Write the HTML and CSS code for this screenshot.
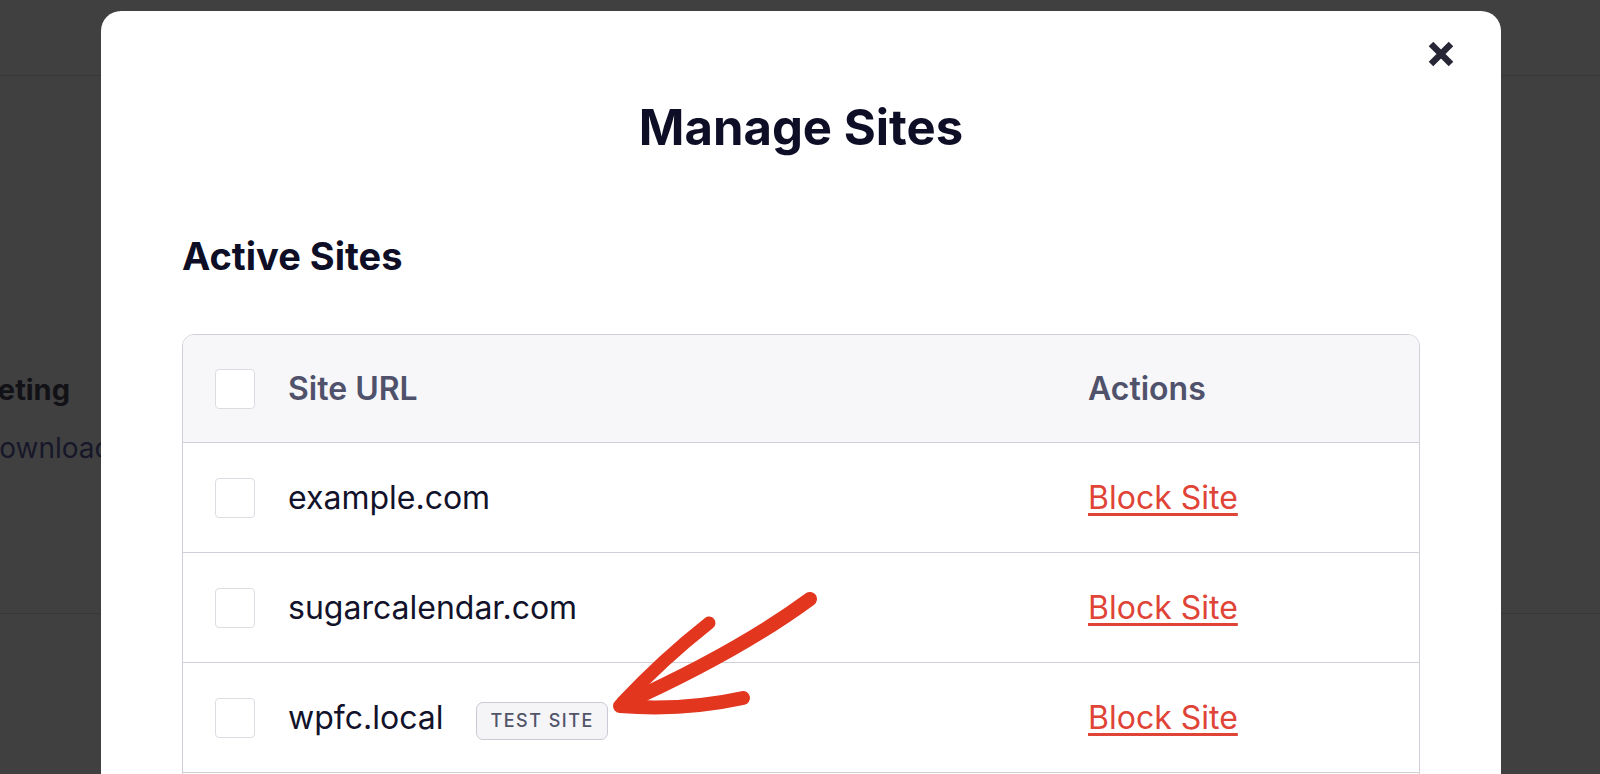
FILE: index.html
```html
<!DOCTYPE html>
<html lang="en">
<head>
    <meta charset="UTF-8">
    <meta name="viewport" content="width=device-width, initial-scale=1.0">
    <title>Manage Sites</title>
    <link rel="stylesheet" href="styles.css">
</head>
<body>

    <!-- page behind the modal -->
    <div class="page">
        <div class="topbar"></div>
        <div class="section">
            <div class="section-inner">
                <div class="section-title">Marketing</div>
                <div class="section-text">Download</div>
            </div>
        </div>
    </div>

    <!-- modal -->
    <div class="overlay">
        <div class="modal">
            <button class="close-btn" aria-label="Close">
                <svg width="26" height="26" viewBox="0 0 26 26">
                    <path d="M3 3 L23 23 M23 3 L3 23" stroke="#262637" stroke-width="6.4" fill="none"/>
                </svg>
            </button>

            <h1 class="modal-title">Manage Sites</h1>
            <h2 class="sub-title">Active Sites</h2>

            <div class="sites-table">
                <div class="row head">
                    <span class="check"></span>
                    <span class="col-url">Site URL</span>
                    <span class="col-actions">Actions</span>
                </div>
                <div class="row">
                    <span class="check"></span>
                    <span class="col-url">example.com</span>
                    <span class="col-actions"><a href="#" class="block-link">Block Site</a></span>
                </div>
                <div class="row">
                    <span class="check"></span>
                    <span class="col-url">sugarcalendar.com</span>
                    <span class="col-actions"><a href="#" class="block-link">Block Site</a></span>
                </div>
                <div class="row">
                    <span class="check"></span>
                    <span class="col-url">wpfc.local <span class="badge">Test Site</span></span>
                    <span class="col-actions"><a href="#" class="block-link">Block Site</a></span>
                </div>
                <div class="row empty"></div>
            </div>
        </div>
    </div>

    <!-- hand drawn arrow pointing at the badge -->
    <svg class="arrow" width="1600" height="774" viewBox="0 0 1600 774">
        <g stroke="#e2361f" fill="none" stroke-linecap="round">
            <path d="M810 599 Q738 652 623 704" stroke-width="14"/>
            <path d="M709 623 Q662 660 622 703" stroke-width="13"/>
            <path d="M620 706 Q684 711 743 698" stroke-width="14"/>
        </g>
    </svg>

</body>
</html>
```

FILE: styles.css
```css
body {
    margin: 0;
    height: 774px;
    overflow: hidden;
    background: #404040;
    font-family: "Inter", "Noto Sans", sans-serif;
    position: relative;
}

/* page behind the overlay */
.page {
    height: 100%;
}
.topbar {
    height: 75px;
    border-bottom: 1px solid #383838;
}
.section {
    height: 538px;
    border-bottom: 1px solid #383838;
    padding-top: 296px;
    box-sizing: border-box;
}
.section-inner {
    width: 70px;
    display: flex;
    flex-direction: column;
    align-items: flex-end;
    white-space: nowrap;
}
.section-title {
    font-size: 29px;
    font-weight: 700;
    line-height: 36px;
    color: #111116;
}
.section-text {
    align-self: flex-start;
    margin-left: -21px;
    margin-top: 22px;
    font-size: 28px;
    line-height: 36px;
    color: #17172a;
}

/* modal */
.overlay {
    position: absolute;
    top: 0;
    left: 0;
    width: 100%;
    height: 100%;
}
.modal {
    position: absolute;
    top: 11px;
    left: 101px;
    width: 1400px;
    height: 900px;
    background: #fff;
    border-radius: 20px;
    padding: 88px 81px 0;
    box-sizing: border-box;
}
.close-btn {
    position: absolute;
    top: 30px;
    right: 47px;
    width: 26px;
    height: 26px;
    padding: 0;
    border: none;
    background: none;
    cursor: pointer;
}
.close-btn svg {
    display: block;
}
.modal-title {
    margin: 0;
    text-align: center;
    font-size: 49px;
    line-height: 58px;
    font-weight: 700;
    color: #0e0e26;
}
.sub-title {
    margin: 76px 0 0;
    font-size: 38px;
    line-height: 46px;
    font-weight: 700;
    color: #0e0e26;
}

/* table */
.sites-table {
    margin-top: 55px;
    border: 1px solid #cfd0d8;
    border-radius: 12px;
    overflow: hidden;
}
.row {
    display: grid;
    grid-template-columns: 40px 1fr 331px;
    column-gap: 33px;
    align-items: center;
    height: 109px;
    padding-left: 32px;
    border-top: 1px solid #cfd0d8;
    font-size: 32px;
    color: #12122a;
}
.row.head {
    height: 107px;
    border-top: none;
    background: #f7f7f9;
    font-weight: 600;
    color: #50526b;
}
.check {
    width: 40px;
    height: 40px;
    box-sizing: border-box;
    border: 1.5px solid #dcdde3;
    border-radius: 4px;
    background: #fff;
}
.col-url {
    display: flex;
    align-items: center;
    gap: 33px;
}
.block-link {
    color: #e04436;
    text-decoration: underline;
    text-decoration-thickness: 2.5px;
    text-underline-offset: 4px;
}
.badge {
    display: inline-block;
    height: 38px;
    line-height: 35px;
    padding: 0 13px;
    box-sizing: border-box;
    border: 1.5px solid #c9cad3;
    border-radius: 7px;
    background: #f5f5f8;
    font-size: 18px;
    font-weight: 500;
    letter-spacing: 1.5px;
    text-transform: uppercase;
    color: #525469;
    margin-top: 6px;
}

.arrow {
    position: absolute;
    top: 0;
    left: 0;
    pointer-events: none;
}
```
